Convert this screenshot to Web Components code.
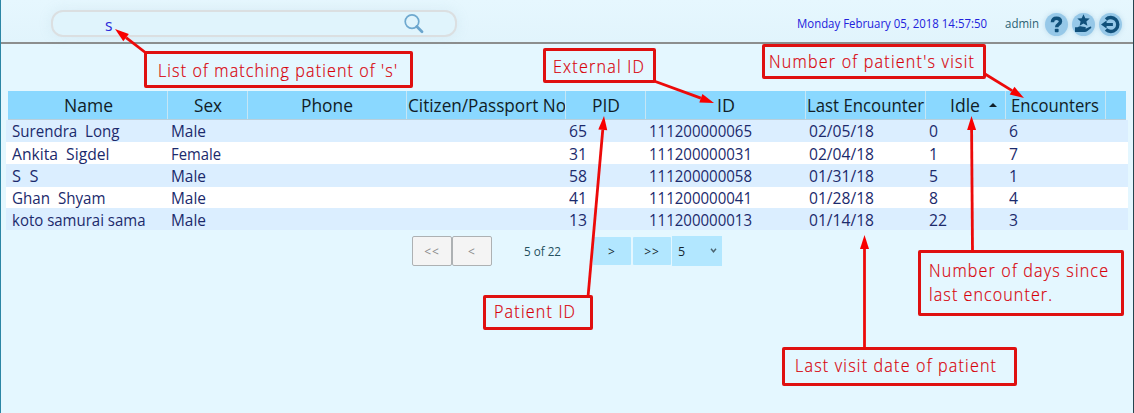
<!DOCTYPE html>
<html lang="en">
<head>
<meta charset="utf-8">
<title>Patient search</title>
<style>
html,body{margin:0;height:100%}
body{font-family:"Open Sans","Noto Sans",sans-serif;background:#e4f7ff;overflow:hidden}
</style>
</head>
<body>
<patient-page></patient-page>
<script>
const define = (name, cls) => customElements.define(name, cls);
const shadow = (el, html) => { el.attachShadow({mode:'open'}).innerHTML = html; return el.shadowRoot; };

/* One line of text set to a given width: condensed, or condensed and tracked with mode="track". */
define('fit-text', class extends HTMLElement {
  connectedCallback(){
    const w = parseFloat(this.getAttribute('w'));
    const r = shadow(this, `<style>
      :host{display:block;width:${w}px;white-space:pre;flex:none}
      span{display:inline-block;white-space:pre;transform-origin:0 50%}
    </style><span></span>`);
    const s = r.querySelector('span');
    s.textContent = this.getAttribute('text');
    const n = s.getBoundingClientRect().width;
    if (this.getAttribute('mode') === 'track') {
      const k = 0.92;
      s.style.letterSpacing = ((w / k - n) / (s.textContent.length - 1)) + 'px';
      s.style.transform = `scaleX(${k})`;
    } else s.style.transform = `scaleX(${w / n})`;
  }
});

define('search-box', class extends HTMLElement {
  connectedCallback(){
    shadow(this, `<style>
      :host{box-sizing:border-box;display:flex;align-items:center;justify-content:space-between;width:406px;height:27px;
        border:2px solid #dbdfe1;border-radius:12px;padding:0 31px 0 52px;background:#e0f4fc;
        box-shadow:0 0 14px rgba(140,175,190,.14);color:#2a2ad8;font-size:15.5px;line-height:27px}
      svg{display:block}
      fit-text{padding-top:3px;font-weight:500}
    </style>
    <fit-text w="7.5" text="s"></fit-text>
    <svg width="20" height="21" viewBox="0 0 20 21" fill="none">
      <circle cx="8" cy="8.6" r="6.8" stroke="#6fa9cf" stroke-width="1.7"/>
      <path d="M12.8 13.6 L18 18.8" stroke="#6ba5cd" stroke-width="2.8" stroke-linecap="round"/>
    </svg>`);
  }
});

const ICONS = {
  help:`<path d="M7.4 9.2C7.5 6.4 9.2 5.2 11.5 5.2C14 5.2 15.5 6.5 15.5 8.6C15.5 11.2 11.7 11.2 11.7 14.2" fill="none" stroke="#10507a" stroke-width="3.4"/><rect x="9.8" y="15.8" width="3.8" height="3.5" rx=".8" fill="#10507a"/>`,
  award:`<path d="M11.5 1.2l1.8 4 4.4.4-3.3 2.9 1 4.3-3.9-2.3-3.9 2.3 1-4.3-3.3-2.9 4.4-.4z" fill="#10507a"/><path d="M3 14.2h2.6c1.4-1 2.8-1.2 4-.7l3.6.6c.9.3.8 1.3 0 1.5h-2.4 3.3l3.8-1.9c1.3-.5 2 .7 1 1.5l-3.8 3.1c-.7.5-1.4.6-2.2.6H3z" fill="#10507a"/>`,
  logout:`<path d="M7 6.4A7 7 0 1 1 7 16.6" fill="none" stroke="#10507a" stroke-width="3.4"/><path d="M2 11.5L7.6 7.4v2.5h6.3v3.2H7.6v2.5z" fill="#10507a"/>`
};
define('round-icon', class extends HTMLElement {
  connectedCallback(){
    shadow(this, `<style>:host{display:block;width:23px;height:23px;border-radius:50%;background:#96c8e8;box-shadow:0 0 5px rgba(110,165,200,.35)}svg{display:block}</style>
    <svg width="23" height="23" viewBox="0 0 23 23">${ICONS[this.getAttribute('name')]}</svg>`);
  }
});

define('top-bar', class extends HTMLElement {
  connectedCallback(){
    shadow(this, `<style>
      :host{box-sizing:border-box;display:flex;justify-content:space-between;height:44px;border-bottom:2px solid #8c8e8e;
        padding:10px 11px 0 50px;background:linear-gradient(#e6f7fe,#e1f4fc)}
      .right{display:flex;align-items:center;height:28px;font-size:12px;line-height:28px}
      .date{color:#2222dc;margin-right:18px}
      .user{color:#2c6272;margin-right:6px}
      .icons{display:flex;gap:4px}
    </style>
    <search-box></search-box>
    <div class="right">
      <fit-text class="date" w="190" text="Monday February 05, 2018 14:57:50"></fit-text>
      <fit-text class="user" w="34" text="admin"></fit-text>
      <div class="icons"><round-icon name="help"></round-icon><round-icon name="award"></round-icon><round-icon name="logout"></round-icon></div>
    </div>`);
  }
});

const COLS = '160px 80px 159px 159px 80px 160px 120px 80px 100px 1fr';
const HEADS = [['Name',49],['Sex',28],['Phone',52],['Citizen/Passport No',158],['PID',28],['ID',18],['Last Encounter',117],['Idle',30],['Encounters',88],['',0]];
const ROWS = [
  ['Surendra  Long',107.5,'Male',35,'65','111200000065','02/05/18','0','6',22,23.5],
  ['Ankita  Sigdel',97.5,'Female',50,'31','111200000031','02/04/18','1','7',22,25.5],
  ['S  S',26.5,'Male',35,'58','111200000058','01/31/18','5','1',23,25.5],
  ['Ghan  Shyam',93.5,'Male',35,'41','111200000041','01/28/18','8','4',21,23.5],
  ['koto samurai sama',133.5,'Male',35,'13','111200000013','01/14/18','22','3',22,25.5]
];
define('patient-table', class extends HTMLElement {
  connectedCallback(){
    const t = (text, w) => text ? `<fit-text w="${w}" text="${text}"></fit-text>` : '';
    const head = HEADS.map(([x, w]) => `<div class="h ${x === 'Idle' ? 'idle' : ''} ${w > 150 ? 'start' : ''}">${t(x, w)}${x === 'Idle' ? '<i></i>' : ''}</div>`).join('');
    const rows = ROWS.map(r => {
      const cells = [[r[0],r[1]],[r[2],r[3]],['',0],['',0],[r[4],18],[r[5],103],[r[6],65],[r[7],r[7].length*9],[r[8],9]];
      return `<div class="row" style="height:${r[9]}px;line-height:${r[10]}px">${cells.map(c => `<div class="c">${t(...c)}</div>`).join('')}</div>`;
    }).join('');
    shadow(this, `<style>
      :host{display:block;margin:47px 5px 0 5px}
      .head{display:grid;grid-template-columns:${COLS};height:28px;width:1118px;margin-left:2px;background:#8ad8ff;color:#111d26;font-size:18px;line-height:28px;border-bottom:1px solid #b9cfdb}
      .h{box-sizing:border-box;display:flex;justify-content:center;border-right:1px solid #c5e6f5;overflow:hidden}
      .h.start{justify-content:flex-start;padding:0 0 0 1px}
      .h:last-child{border:0}
      .h:first-child{padding-left:1px}
      .h:nth-child(n+7){padding-right:1px}
      .idle{position:relative}
      .idle i{position:absolute;left:63px;top:12px;border:4px solid transparent;border-top:0;border-bottom:4px solid #10202a}
      .row{display:grid;grid-template-columns:${COLS};box-sizing:border-box;padding-left:2px;width:1122px;background:#dbeeff;color:#1b2a6c;font-size:16px}
      .row:nth-child(even){background:#fff}
      .c{padding-left:4px;height:100%}
      .c:nth-child(n+2){padding-left:3.3px}
      .c:nth-child(n+7){padding-left:2.6px}
    </style><div class="head">${head}</div>${rows}`);
  }
});

define('page-button', class extends HTMLElement {
  connectedCallback(){
    shadow(this, `<style>
      :host{box-sizing:border-box;display:flex;align-items:center;justify-content:center;width:38px;height:28px;background:#b2e7ff;color:#182830;font-size:12px;border-radius:1px;letter-spacing:1px}
      :host([disabled]){width:40px;height:30px;background:#f4f4f4;border:1px solid #adb1b3;border-radius:2px;color:#8b8b8b}
    </style><slot></slot>`);
  }
});
define('table-pager', class extends HTMLElement {
  connectedCallback(){
    shadow(this, `<style>
      :host{display:flex;align-items:center;margin:6px 0 0 411px;height:30px;font-size:12px;color:#245060}
      .count{margin:1px 32px 0 32px;line-height:30px}
      .next{margin-right:2px}
      .size{box-sizing:border-box;display:flex;align-items:center;justify-content:space-between;width:50px;height:30px;margin-left:1px;padding:0 5px 0 6px;background:#b2e7ff;color:#15252e;font-size:12.5px}
    </style>
    <page-button disabled>&lt;&lt;</page-button><page-button disabled>&lt;</page-button>
    <fit-text class="count" w="37" text="5 of 22"></fit-text>
    <page-button class="next">&gt;</page-button><page-button>&gt;&gt;</page-button>
    <div class="size"><span>5</span><svg width="7" height="6" viewBox="0 0 7 6"><path d="M1 .8L3.5 3.8L6 .8" fill="none" stroke="#4b6470" stroke-width="1.4"/></svg></div>`);
  }
});

/* A boxed note, placed freely over the page. Lines are "text|width" pairs, split by ";". */
define('call-out', class extends HTMLElement {
  connectedCallback(){
    const [x, y, w, h, px, lh, pt = 0] = this.getAttribute('box').split(' ').map(Number);
    const lines = this.getAttribute('lines').split(';').map(l => l.split('|'));
    shadow(this, `<style>
      :host{position:absolute;box-sizing:border-box;left:${x}px;top:${y}px;width:${w}px;height:${h}px;border:3px solid #df1010;border-radius:2px;
        padding:${pt}px 0 0 ${px}px;color:#d80008;font-size:17.5px;font-weight:340;line-height:${lh}px;background:#e4f7ff}
      fit-text{-webkit-text-stroke:.2px #d80008}
    </style>${lines.map(([t, n]) => `<fit-text mode="track" w="${n}" text="${t}"></fit-text>`).join('')}`);
  }
});

/* Arrows from the notes to what they describe. */
define('note-arrows', class extends HTMLElement {
  connectedCallback(){
    const list = [[146,53,115,29],[654,81,714,103],[985,74,1024,98],[588,297,604,116],[972.5,252,971.5,116],[864.5,349,864.5,235]];
    const svg = list.map(([a, b, c, d]) => {
      const L = Math.hypot(c - a, d - b), ux = (c - a) / L, uy = (d - b) / L, bx = c - ux * 14, by = d - uy * 14;
      return `<path d="M${a} ${b}L${bx} ${by}" stroke="#ec0a0a" stroke-width="2.8"/><path d="M${c} ${d}L${bx - uy * 4.5} ${by + ux * 4.5}L${bx + uy * 4.5} ${by - ux * 4.5}Z" fill="#f80000"/>`;
    }).join('');
    shadow(this, `<style>:host{position:absolute;left:0;top:0}svg{display:block}</style><svg width="1134" height="413">${svg}</svg>`);
  }
});

define('patient-page', class extends HTMLElement {
  connectedCallback(){
    shadow(this, `<style>
      :host{box-sizing:border-box;display:block;position:relative;width:1134px;height:413px;overflow:hidden;background:#e4f7ff;border-left:1px solid #2b86a5;border-right:1px solid #25444f}
      .notes{position:absolute;left:-1px;top:0}
    </style>
    <top-bar></top-bar>
    <patient-table></patient-table>
    <table-pager></table-pager>
    <div class="notes">
      <call-out box="144 51 269 37 11 33" lines="List of matching patient of 's'|239"></call-out>
      <call-out box="543 48 113 35 7 30" lines="External ID|91"></call-out>
      <call-out box="762 44 224 35 4 29" lines="Number of patient's visit|205"></call-out>
      <call-out box="483 295 110 35 8 27" lines="Patient ID|81"></call-out>
      <call-out box="918 250 206 66 8 24 5" lines="Number of days since|179;last encounter.|123"></call-out>
      <call-out box="782 347 235 39 10 31" lines="Last visit date of patient|201"></call-out>
      <note-arrows></note-arrows>
    </div>`);
  }
});
</script>
</body>
</html>
